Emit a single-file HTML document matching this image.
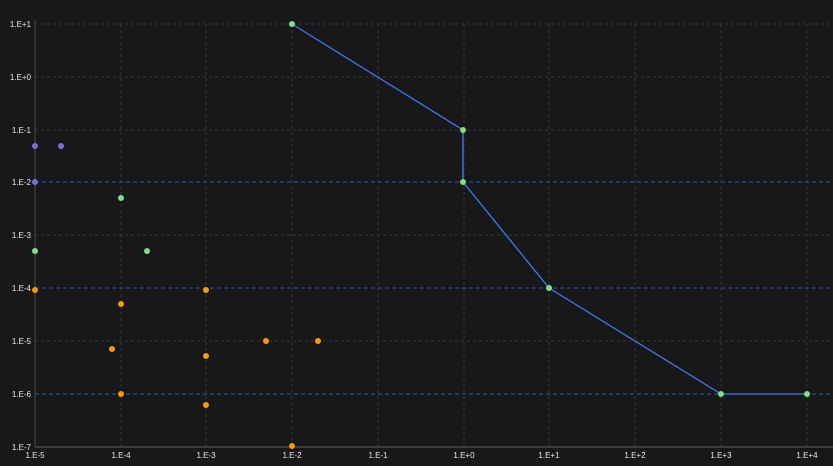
<!DOCTYPE html><html><head><style>html,body{margin:0;background:#18181b;}svg{display:block}text{font-family:"Liberation Sans",sans-serif;font-size:8px;fill:#e8e8e8}</style></head><body>
<svg width="833" height="466" viewBox="0 0 833 466">
<rect width="833" height="466" fill="#18181b"/>
<g stroke="#38383c" stroke-width="1" stroke-dasharray="3,3">
<line x1="121" y1="24" x2="121" y2="447"/><line x1="206" y1="24" x2="206" y2="447"/><line x1="292" y1="24" x2="292" y2="447"/><line x1="378" y1="24" x2="378" y2="447"/><line x1="464" y1="24" x2="464" y2="447"/><line x1="549" y1="24" x2="549" y2="447"/><line x1="635" y1="24" x2="635" y2="447"/><line x1="721" y1="24" x2="721" y2="447"/><line x1="807" y1="24" x2="807" y2="447"/>
<line x1="35" y1="24" x2="833" y2="24"/><line x1="35" y1="77" x2="833" y2="77"/><line x1="35" y1="130" x2="833" y2="130"/><line x1="35" y1="235" x2="833" y2="235"/><line x1="35" y1="341" x2="833" y2="341"/>
</g>
<g stroke="#2f5aa8" stroke-width="1" stroke-dasharray="4,3">
<line x1="35" y1="182" x2="833" y2="182"/><line x1="35" y1="288" x2="833" y2="288"/><line x1="35" y1="394" x2="833" y2="394"/>
</g>
<line x1="35" y1="20" x2="35" y2="447" stroke="#4a4a4e"/>
<line x1="35" y1="447" x2="833" y2="447" stroke="#4a4a4e" stroke-width="1.5"/>
<polyline points="292,24 463,130 463,182 549,288 721,394 807,394" fill="none" stroke="#3b7be8" stroke-width="1.3"/>
<g fill="#7a6fd6"><circle cx="35" cy="146" r="3"/><circle cx="61" cy="146" r="3"/><circle cx="35" cy="182" r="3"/></g>
<g fill="#7ee07e"><circle cx="121" cy="198" r="3"/><circle cx="35" cy="251" r="3"/><circle cx="147" cy="251" r="3"/>
<circle cx="292" cy="24" r="3"/><circle cx="463" cy="130" r="3"/><circle cx="463" cy="182" r="3"/><circle cx="549" cy="288" r="3"/><circle cx="721" cy="394" r="3"/><circle cx="807" cy="394" r="3"/></g>
<g fill="#f59a0c"><circle cx="35" cy="290" r="3"/><circle cx="121" cy="304" r="3"/><circle cx="206" cy="290" r="3"/><circle cx="112" cy="349" r="3"/><circle cx="206" cy="356" r="3"/><circle cx="266" cy="341" r="3"/><circle cx="318" cy="341" r="3"/><circle cx="121" cy="394" r="3"/><circle cx="206" cy="405" r="3"/><circle cx="292" cy="446" r="3"/></g>
<g text-anchor="end">
<text x="31" y="27">1.E+1</text><text x="31" y="80">1.E+0</text><text x="31" y="133">1.E-1</text><text x="31" y="185">1.E-2</text><text x="31" y="238">1.E-3</text><text x="31" y="291">1.E-4</text><text x="31" y="344">1.E-5</text><text x="31" y="397">1.E-6</text><text x="31" y="450">1.E-7</text>
</g>
<g text-anchor="middle">
<text x="35" y="458">1.E-5</text><text x="121" y="458">1.E-4</text><text x="206" y="458">1.E-3</text><text x="292" y="458">1.E-2</text><text x="378" y="458">1.E-1</text><text x="464" y="458">1.E+0</text><text x="549" y="458">1.E+1</text><text x="635" y="458">1.E+2</text><text x="721" y="458">1.E+3</text><text x="807" y="458">1.E+4</text>
</g>
</svg></body></html>
